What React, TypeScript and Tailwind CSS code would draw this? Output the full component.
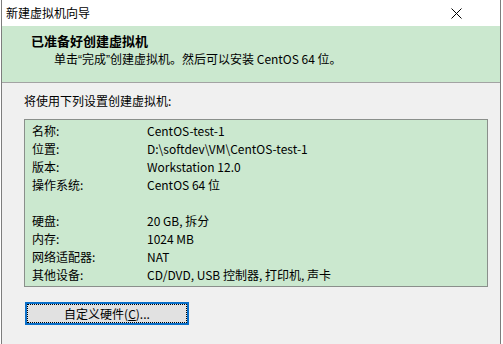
const rows: [string, string][] = [
  ["名称:", "CentOS-test-1"],
  ["位置:", "D:\\softdev\\VM\\CentOS-test-1"],
  ["版本:", "Workstation 12.0"],
  ["操作系统:", "CentOS 64 位"],
  ["", ""],
  ["硬盘:", "20 GB, 拆分"],
  ["内存:", "1024 MB"],
  ["网络适配器:", "NAT"],
  ["其他设备:", "CD/DVD, USB 控制器, 打印机, 声卡"],
]

export default function App() {
  return (
    <div
      className="w-[503px] h-[344px] overflow-hidden bg-white pl-px text-[12px] text-black"
      style={{ fontFamily: '"Noto Sans CJK SC", "Liberation Sans", sans-serif' }}
    >
      <div className="w-[500px] h-[344px] border-x border-[#7d7d7d] bg-[#f0f0f0] flex flex-col">
        {/* title bar */}
        <div className="h-[26px] bg-white flex items-center justify-between pl-[4px] pr-[38px]">
          <span className="leading-none">新建虚拟机向导</span>
          <svg width="11" height="11" viewBox="0 0 11 11" className="text-black">
            <path d="M0.5 0.5 L10.5 10.5 M10.5 0.5 L0.5 10.5" stroke="currentColor" strokeWidth="1" />
          </svg>
        </div>

        {/* header */}
        <div className="h-[57px] bg-[#cbe8cf] border-b border-[#a3a3a3] pl-[29px] pt-[6px]">
          <div className="text-[13px] font-bold leading-[18px]">已准备好创建虚拟机</div>
          <div className="pl-[23px] leading-[18px]">
            单击<span className="font-['Liberation_Sans',sans-serif]">“</span>完成
            <span className="font-['Liberation_Sans',sans-serif]">”</span>创建虚拟机。然后可以安装 CentOS 64 位。
          </div>
        </div>

        {/* body */}
        <div className="px-[22px] pt-[9px]">
          <div className="leading-[18px]">将使用下列设置创建虚拟机:</div>
          <div className="mt-[9px] w-[464px] border border-[#8a8f8b] bg-[#cbe8cf] pl-[7px] py-[2px]">
            {rows.map(([k, v], i) => (
              <div key={i} className="flex h-[18px] leading-[18px]">
                <span className="w-[115px]">{k}</span>
                <span>{v}</span>
              </div>
            ))}
          </div>
          <button className="mt-[15px] ml-px w-[164px] h-[23px] border-2 border-[#0a6fc9] bg-[#e1e1e1] p-0">
            <div className="h-full border border-dotted border-black flex items-center justify-center leading-none">
              自定义硬件(<span className="underline">C</span>)...
            </div>
          </button>
        </div>
      </div>
    </div>
  )
}
